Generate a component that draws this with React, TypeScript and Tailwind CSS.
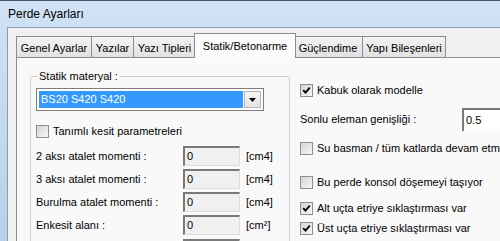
import React from "react";

function Check({ checked }: { checked?: boolean }) {
  return (
    <span className="w-[13px] h-[13px] border border-[#8e8f8f] bg-gradient-to-br from-[#d4d4d4] to-[#f8f8f8] flex items-center justify-center shrink-0">
      {checked && (
        <svg width="9" height="9" viewBox="0 0 9 9">
          <path d="M1.2 4.2 L3.5 6.6 L7.8 1.6" stroke="#000" strokeWidth="1.9" fill="none" />
        </svg>
      )}
    </span>
  );
}

function CheckRow({ label, checked, className = "" }: { label: string; checked?: boolean; className?: string }) {
  return (
    <div className={"flex items-center h-[16px] " + className}>
      <Check checked={checked} />
      <span className="ml-[4px] whitespace-nowrap">{label}</span>
    </div>
  );
}

function ValueRow({ label, unit, className = "" }: { label: string; unit: React.ReactNode; className?: string }) {
  return (
    <div className={"flex items-center h-[20px] " + className}>
      <span className="w-[147px] whitespace-nowrap">{label}</span>
      <div className="w-[57px] h-[20px] border-t-2 border-l-2 border-r border-b border-t-[#7a7a7a] border-l-[#7a7a7a] border-r-[#dcdcdc] border-b-[#dcdcdc] bg-[#f0f0f0] flex items-center pl-[2px]">
        0
      </div>
      <span className="ml-[6px] whitespace-nowrap">{unit}</span>
    </div>
  );
}

const tabs = [
  { name: "Genel Ayarlar", w: "w-[76px]" },
  { name: "Yazılar", w: "w-[43px]" },
  { name: "Yazı Tipleri", w: "w-[63px]" },
  { name: "Statik/Betonarme", w: "w-[102px]", sel: true },
  { name: "Güçlendime", w: "w-[70px]" },
  { name: "Yapı Bileşenleri", w: "w-[84px]" },
];

export default function App() {
  return (
    <div className="w-[500px] h-[241px] overflow-hidden font-['Liberation_Sans',Arial,sans-serif] text-[11px] text-black bg-gradient-to-b from-[#cfe2f6] to-[#b8d0ea] border-t border-[#4a5563] flex flex-col">
      <div className="h-[26px] shrink-0 flex items-center pl-[8px] text-[12px] text-black">
        Perde Ayarları
      </div>
      <div className="flex-1 flex pl-[7px]">
        <div className="flex-1 border-l border-t border-[#8a9cb2] bg-[#f0f0f0] flex flex-col pl-[8px] pt-[5px]">
          <div className="flex items-end h-[24px] shrink-0 relative z-10">
            {tabs.map((t) =>
              t.sel ? (
                <div
                  key={t.name}
                  className={t.w + " h-[25px] -mb-px -mx-[2px] border border-b-0 border-[#898c95] bg-[#fbfbfb] flex items-start justify-center pt-[4px] relative z-10 shrink-0"}
                >
                  {t.name}
                </div>
              ) : (
                <div
                  key={t.name}
                  className={t.w + " h-[21px] -ml-px first:ml-0 border border-b-0 border-[#898c95] bg-gradient-to-b from-[#f3f3f3] to-[#e2e2e2] flex items-center justify-center pt-[3px] shrink-0"}
                >
                  {t.name}
                </div>
              )
            )}
          </div>
          <div className="flex-1 border-l border-t border-[#898c95] bg-[#f9f9f9] flex pl-[13px] pt-[11px]">
            <fieldset className="w-[260px] border border-[#d0d0d0] rounded-[2px] pl-[5px] shrink-0 self-start h-[300px]">
              <legend className="ml-[2px] px-[1px] leading-[14px]">Statik materyal :</legend>
              <div className="mt-[5px] w-[228px] h-[23px] border border-[#7e7e7e] bg-white flex p-[2px]">
                <div className="flex-1 bg-[#3399ff] text-white flex items-center pl-[2px]">BS20 S420 S420</div>
                <div className="w-[17px] ml-px flex items-center justify-center bg-gradient-to-b from-[#f6f6f6] to-[#e4e4e4] border border-[#b5b5b5]">
                  <svg width="7" height="4" viewBox="0 0 7 4">
                    <path d="M0 0 H7 L3.5 4 Z" fill="#000" />
                  </svg>
                </div>
              </div>
              <CheckRow label="Tanımlı kesit parametreleri" className="mt-[12px]" />
              <ValueRow label="2 aksı atalet momenti :" unit="[cm4]" className="mt-[7px]" />
              <ValueRow label="3 aksı atalet momenti :" unit="[cm4]" className="mt-[3px]" />
              <ValueRow label="Burulma atalet momenti :" unit="[cm4]" className="mt-[3px]" />
              <ValueRow label="Enkesit alanı :" unit={<>[cm²]</>} className="mt-[3px]" />
              <ValueRow label="Sadeleştirme katsayısı :" unit={<>[cm²]</>} className="mt-[4px]" />
            </fieldset>
            <div className="flex-1 flex flex-col pl-[10px] pt-[13px]">
              <CheckRow label="Kabuk olarak modelle" checked />
              <div className="flex items-center h-[23px] mt-[10px]">
                <span className="w-[162px] whitespace-nowrap">Sonlu eleman genişliği :</span>
                <div className="flex-1 h-[23px] border-t-2 border-l-2 border-t-[#7a7a7a] border-l-[#7a7a7a] bg-white flex items-center pl-[2px]">
                  0.5
                </div>
              </div>
              <CheckRow label="Su basman / tüm katlarda devam etmez" className="mt-[9px]" />
              <CheckRow label="Bu perde konsol döşemeyi taşıyor" className="mt-[18px]" />
              <CheckRow label="Alt uçta etriye sıklaştırması var" checked className="mt-[10px]" />
              <CheckRow label="Üst uçta etriye sıklaştırması var" checked className="mt-[4px]" />
            </div>
          </div>
        </div>
      </div>
    </div>
  );
}
